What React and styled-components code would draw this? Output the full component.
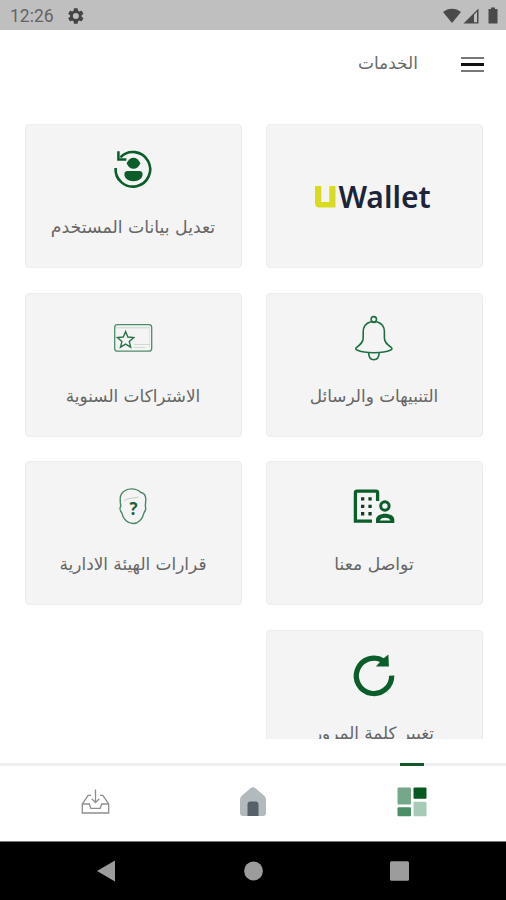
import React from "react";
import styled, { createGlobalStyle } from "styled-components";

const GREEN = "#0b5d2a";

const GlobalStyle = createGlobalStyle`
  * {
    box-sizing: border-box;
  }
  body {
    margin: 0;
    background: #fff;
    font-family: "DejaVu Sans", sans-serif;
  }
  svg {
    display: block;
  }
`;

const Screen = styled.div`
  width: 506px;
  height: 900px;
  display: flex;
  flex-direction: column;
  overflow: hidden;
  background: #fff;
`;

const StatusBar = styled.div`
  height: 30px;
  flex: none;
  display: flex;
  align-items: center;
  justify-content: space-between;
  padding: 1px 7px 0 10px;
  background: #bfbfbf;
`;

const StatusGroup = styled.div`
  display: flex;
  align-items: center;
  gap: ${(p) => p.$gap}px;
`;

const Clock = styled.span`
  font-family: Roboto, sans-serif;
  font-size: 17.5px;
  line-height: 20px;
  color: #646464;
`;

const Header = styled.header`
  height: 94px;
  flex: none;
  display: flex;
  align-items: flex-start;
  gap: 43px;
  padding: 21px 22px 0;
`;

const MenuButton = styled.div`
  display: flex;
  flex-direction: column;
  gap: 4px;
  padding-top: 6px;
`;

const MenuLine = styled.span`
  width: 23px;
  height: 2.4px;
  background: ${(p) => p.$color};
`;

const Title = styled.h1`
  margin: 0;
  font-size: ${(p) => p.$size}px;
  font-weight: 400;
  line-height: 24px;
  color: #6a6a6a;
`;

const Services = styled.main`
  height: 615px;
  flex: none;
  overflow: hidden;
  display: grid;
  grid-template-columns: 217px 217px;
  grid-auto-rows: 144px;
  gap: 24.7px 24px;
  align-content: start;
  padding: 0 23.5px 0 25px;
`;

const Card = styled.div`
  display: flex;
  flex-direction: column;
  align-items: center;
  justify-content: ${(p) => (p.$centered ? "center" : "flex-start")};
  padding-top: ${(p) => (p.$centered ? 1 : 20)}px;
  background: #f4f4f4;
  border: 1px solid #ededed;
  border-radius: 4px;
`;

const Label = styled.div`
  margin-top: 20px;
  font-size: ${(p) => p.$size}px;
  line-height: 28px;
  white-space: nowrap;
  color: #666;
`;

const WalletLogo = styled.div`
  display: flex;
  align-items: center;
  gap: 2px;
  margin-right: 3px;
  direction: ltr;
`;

const WalletName = styled.span`
  font-family: "Noto Sans", sans-serif;
  font-size: 30px;
  font-weight: 600;
  line-height: 40px;
  color: #1b2438;
`;

const TabBar = styled.nav`
  height: 78px;
  flex: none;
  margin-top: 24px;
  display: grid;
  grid-template-columns: repeat(3, 158.5px);
  justify-content: center;
  border-top: 3px solid #f0f0f0;
`;

const Tab = styled.div`
  display: flex;
  flex-direction: column;
  align-items: center;
`;

const TabMarker = styled.span`
  width: 24px;
  height: 3px;
  margin: -3px 0 21px;
  background: ${(p) => (p.$active ? "#14552a" : "transparent")};
`;

const SystemBar = styled.div`
  flex: 1;
  display: grid;
  grid-template-columns: repeat(3, 146.5px);
  justify-content: center;
  justify-items: center;
  align-items: center;
  direction: ltr;
  background: #000;
  border-top: 1px solid #777;
`;

const Slot = ({ children }) => (
  <svg width="48" height="48" viewBox="0 0 48 48" fill="none">
    {children}
  </svg>
);

const EditUserIcon = () => (
  <Slot>
    <path d="M6.600 23a17.300 17.300 0 1 0 4.800-10.700" stroke={GREEN} strokeWidth="2.600" />
    <path d="M9.400 6.200v8.300h8" stroke={GREEN} strokeWidth="2.500" />
    <path d="M17.600 18.300c1.600-3.700 4-5.600 6.900-5.600s5.300 1.900 6.900 5.600c-1.700 3.700-4 5.500-6.900 5.500s-5.200-1.800-6.900-5.500z" fill={GREEN} />
    <path d="M15.400 29.200c0-2 1.200-3.200 3.200-3.200h11.800c2 0 3.200 1.200 3.200 3.200 0 4-3.700 7-9.100 7s-9.100-3-9.100-7z" fill={GREEN} />
  </Slot>
);

const BellIcon = () => (
  <Slot>
    <g stroke="#1f7040" strokeWidth="1.600">
      <circle cx="23.800" cy="5.300" r="2.700" />
      <path d="M20.800 7.800c-4.900 1.500-7.600 5.300-7.600 10v6.200c0 4.500-3.200 6.700-6.800 9.500-1 .9-.8 2 .5 2.500 4 1.800 10 2.700 16.900 2.700s13-.9 17-2.700c1.300-.5 1.500-1.600.5-2.500-3.700-2.800-6.900-5-6.900-9.500v-6.200c0-4.700-2.700-8.500-7.600-10" />
      <path d="M20.800 7.800q3 1.600 6 0" strokeWidth="1.200" />
      <path d="M18.600 38.800c.2 4.500 2 7 5.200 7s5.200-2.500 5.400-7" />
    </g>
  </Slot>
);

const MembershipIcon = () => (
  <Slot>
    <rect x="5.700" y="10.600" width="37" height="26.600" rx="2.800" stroke="#4f8c6a" strokeWidth="1.300" />
    <path d="M7 13.800h34" stroke="#c3dacb" />
    <path d="M40.500 14v19.500" stroke="#dbe6df" />
    <path d="M25 30.500h16M25 33.500h11" stroke="#c9d6cd" strokeWidth=".9" />
    <path d="M16.600 17.500l2.300 5.500 5.900.5-4.500 3.900 1.400 5.800-5.100-3.100-5.100 3.100 1.400-5.800-4.500-3.900 5.900-.5z" stroke="#2c7449" strokeWidth="1.400" />
  </Slot>
);

const BuildingIcon = () => (
  <Slot>
    <path d="M22 39.200H5.400V10.800q0-1.600 1.600-1.600h19q1.600 0 1.600 1.600V19" stroke={GREEN} strokeWidth="3.300" />
    <path
      d="M11 15.300h3.300v3.300H11zM18.400 15.300h3.300v3.300h-3.300zM11 22.700h3.300V26H11zM18.400 22.700h3.300V26h-3.300zM11 30.100h3.300v3.300H11zM18.400 30.100h3.300v3.300h-3.300z"
      fill="#153f22"
    />
    <circle cx="34.900" cy="24" r="4.200" stroke={GREEN} strokeWidth="3" />
    <path
      d="M26 41v-3.300c0-3.700 4-5.900 9.100-5.900s9.200 2.200 9.200 5.900V41zM29.800 38.500h10.700c-1-2-3-2.700-5.400-2.700s-4.400.7-5.300 2.700z"
      fill={GREEN}
      fillRule="evenodd"
    />
  </Slot>
);

const Question = styled.text`
  font-family: "Open Sans", sans-serif;
  font-size: 17px;
  font-weight: 700;
  text-anchor: middle;
  fill: #1c6238;
`;

const BoardIcon = () => (
  <Slot>
    <path
      d="M11.200 17C11.200 10.500 16.500 6.900 22.500 6.900C26.500 6.900 29.500 8.200 31.500 10.300C35 11 37 13.500 36.800 18L36.300 24C37 26 36.500 29 35 30.800C33.500 37.500 29 41.500 24 41.500C18.500 41.500 14 37 12.800 30.800C11 29 10.500 26 11.800 24C11.300 21.500 11.200 19 11.200 17z"
      stroke="#4b8766"
      strokeWidth="1.400"
    />
    <path d="M15 19.300c2.500-3.600 7.500-2.300 14.500-4.300" stroke="#c2cbc5" />
    <Question x="24.500" y="32.800">?</Question>
  </Slot>
);

const ReloadIcon = () => (
  <Slot>
    <path d="M41.700 24.600A17.700 17.700 0 1 1 33.500 9.900" stroke={GREEN} strokeWidth="5.300" />
    <path d="M38.400 3.500l.5 12H26l3-3.500 5-5z" fill={GREEN} />
  </Slot>
);

const services = [
  { id: "wallet" },
  { id: "edit", label: "تعديل بيانات المستخدم", Icon: EditUserIcon, size: 17.3 },
  { id: "alerts", label: "التنبيهات والرسائل", Icon: BellIcon, size: 16.9 },
  { id: "subs", label: "الاشتراكات السنوية", Icon: MembershipIcon, size: 16.9 },
  { id: "contact", label: "تواصل معنا", Icon: BuildingIcon, size: 17.2 },
  { id: "board", label: "قرارات الهيئة الادارية", Icon: BoardIcon, size: 16.9 },
  { id: "password", label: "تغيير كلمة المرور", Icon: ReloadIcon, size: 16.8 },
];

const Wallet = () => (
  <WalletLogo>
    <svg width="22" height="22" viewBox="0 0 22 22">
      <path d="M1 1q0-1 1-1h4.300q1 0 1 1v15h8V1q0-1 1-1h4.200q1 0 1 1v20.500H5.500Q1 21.500 1 17z" fill="#d8db1f" />
    </svg>
    <WalletName>Wallet</WalletName>
  </WalletLogo>
);

const DashboardIcon = () => (
  <svg width="30" height="30" viewBox="0 0 30 30">
    <rect x=".5" y=".5" width="13.500" height="17" rx="1" fill="#75a78a" />
    <rect x="16.500" y=".5" width="13" height="11.300" rx="1" fill="#07591f" />
    <rect x=".5" y="20.200" width="13.500" height="9" rx="1" fill="#4b8e68" />
    <rect x="16.500" y="14.700" width="13" height="14.500" rx="1" fill="#a6cab5" />
  </svg>
);

const HomeIcon = () => (
  <svg width="28" height="30" viewBox="0 0 28 30">
    <path d="M1 12.500c0-1.500.6-2.600 1.800-3.700L11.500 1.300c1.700-1.400 3.300-1.400 5 0l8.700 7.500c1.200 1.100 1.800 2.200 1.800 3.700V26q0 3-3 3H4q-3 0-3-3z" fill="#b3babe" />
    <path d="M8.500 29V17.500q0-3 3-3h5q3 0 3 3V29z" fill="#56606a" />
  </svg>
);

const InboxIcon = () => (
  <svg width="30" height="30" viewBox="0 0 30 30" fill="none" stroke="#8e8e8e" strokeWidth="1.300">
    <path d="M11 8.300H8.200L2.300 17v9h26.400v-9l-5.900-8.700H20" />
    <path d="M2.300 17h7l1.500 4.300h9.400l1.500-4.300h7" />
    <path d="M15.500 2.500v13M11.700 11.800l3.800 3.800 3.800-3.800" />
  </svg>
);

const tabs = [
  { id: "services", Icon: DashboardIcon, active: true },
  { id: "home", Icon: HomeIcon },
  { id: "inbox", Icon: InboxIcon },
];

const App = () => {
  return (
    <Screen dir="rtl">
      <GlobalStyle />
      <StatusBar dir="ltr">
        <StatusGroup $gap={13}>
          <Clock>12:26</Clock>
          <svg width="18" height="18" viewBox="0 0 24 24" fill="#444">
            <path
              fillRule="evenodd"
              d="M19.400 13a7.500 7.500 0 0 0 0-2l2.200-1.700c.2-.1.200-.4.100-.6l-2.100-3.600c-.1-.2-.4-.3-.6-.2l-2.600 1a7.700 7.700 0 0 0-1.700-1l-.4-2.700a.5.5 0 0 0-.5-.4H9.700a.5.5 0 0 0-.5.4l-.4 2.700a7.700 7.700 0 0 0-1.700 1l-2.600-1c-.2-.1-.5 0-.6.2L1.800 8.700c-.1.200-.1.500.1.600L4.100 11a7.500 7.500 0 0 0 0 2l-2.200 1.700c-.2.100-.2.400-.1.600l2.100 3.600c.1.200.4.300.6.200l2.600-1a7.700 7.700 0 0 0 1.700 1l.4 2.700c0 .2.200.4.500.4h4.100c.3 0 .5-.2.500-.4l.4-2.700a7.700 7.700 0 0 0 1.700-1l2.600 1c.2.100.5 0 .6-.2l2.100-3.600c.1-.2.100-.5-.1-.6zM11.800 16a4 4 0 1 1 0-8 4 4 0 0 1 0 8z"
            />
          </svg>
        </StatusGroup>
        <StatusGroup $gap={2}>
          <svg width="18" height="16" viewBox="0 0 18 16" fill="#4a4a4a">
            <path d="M0 4C5-.5 13-.5 18 4L9 15z" />
          </svg>
          <svg width="16" height="16" viewBox="0 0 16 16">
            <path d="M.5 15.500L15.500.5v15z" fill="#4a4a4a" />
            <path d="M11 6.700l3-3v10.500h-3z" fill="#bfbfbf" />
          </svg>
          <svg width="18" height="17" viewBox="0 0 18 17" fill="#4a4a4a">
            <path d="M7.500 2h2.500V.500h4V2h2.500v14.500h-9z" />
          </svg>
        </StatusGroup>
      </StatusBar>

      <Header>
        <MenuButton>
          <MenuLine $color="#777" />
          <MenuLine $color="#111" />
          <MenuLine $color="#777" />
        </MenuButton>
        <Title $size={17}>الخدمات</Title>
      </Header>

      <Services>
        {services.map(({ id, label, Icon, size }) => (
          <Card key={id} $centered={!Icon}>
            {Icon ? (
              <>
                <Icon />
                <Label $size={size}>{label}</Label>
              </>
            ) : (
              <Wallet />
            )}
          </Card>
        ))}
      </Services>

      <TabBar>
        {tabs.map(({ id, Icon, active }) => (
          <Tab key={id}>
            <TabMarker $active={active} />
            <Icon />
          </Tab>
        ))}
      </TabBar>

      <SystemBar>
        <svg width="20" height="22" viewBox="0 0 20 22">
          <path d="M18 .5v21L0 11z" fill="#9c9c9c" />
        </svg>
        <svg width="20" height="20" viewBox="0 0 20 20">
          <circle cx="10.500" cy="10" r="9.400" fill="#9c9c9c" />
        </svg>
        <svg width="20" height="20" viewBox="0 0 20 20">
          <rect x="0" y=".3" width="19" height="19.400" rx="1.500" fill="#9c9c9c" />
        </svg>
      </SystemBar>
    </Screen>
  );
};

export default App;
